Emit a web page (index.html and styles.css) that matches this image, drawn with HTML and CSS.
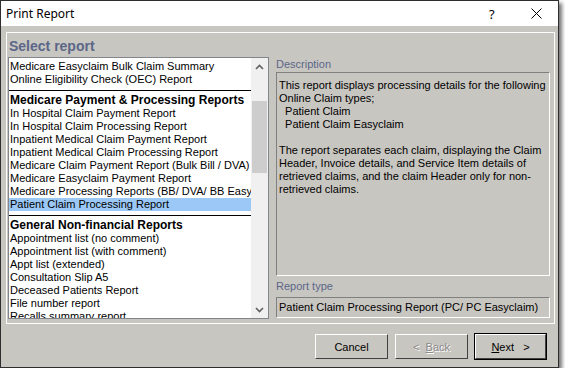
FILE: index.html
```html
<!DOCTYPE html>
<html lang="en">
 <head>
  <meta charset="UTF-8">
  <title>Print Report</title>
  <link rel="stylesheet" href="styles.css">
 </head>
 <body>
  <div class="window">
   <div class="titlebar">
    <span class="title">Print Report</span>
    <span class="help">?</span>
    <span class="close">
     <svg width="11" height="11" viewBox="0 0 11 11"><path d="M0.5 0.5 L10.5 10.5 M10.5 0.5 L0.5 10.5" stroke="#000" stroke-width="1" fill="none"/></svg>
    </span>
   </div>
   <div class="client">
    <div class="panel">
     <div class="heading">Select report</div>
     <div class="cols">
      <div class="listbox">
       <div class="items">
        <div class="item">Medicare Easyclaim Bulk Claim Summary</div>
        <div class="item">Online Eligibility Check (OEC) Report</div>
        <div class="sep"></div>
        <div class="item group">Medicare Payment &amp; Processing Reports</div>
        <div class="item">In Hospital Claim Payment Report</div>
        <div class="item">In Hospital Claim Processing Report</div>
        <div class="item">Inpatient Medical Claim Payment Report</div>
        <div class="item">Inpatient Medical Claim Processing Report</div>
        <div class="item">Medicare Claim Payment Report (Bulk Bill / DVA)</div>
        <div class="item">Medicare Easyclaim Payment Report</div>
        <div class="item">Medicare Processing Reports (BB/ DVA/ BB Easyclaim)</div>
        <div class="item selected">Patient Claim Processing Report</div>
        <div class="sep"></div>
        <div class="item group">General Non-financial Reports</div>
        <div class="item">Appointment list (no comment)</div>
        <div class="item">Appointment list (with comment)</div>
        <div class="item">Appt list (extended)</div>
        <div class="item">Consultation Slip A5</div>
        <div class="item">Deceased Patients Report</div>
        <div class="item">File number report</div>
        <div class="item">Recalls summary report</div>
       </div>
       <div class="scrollbar">
        <div class="arrow">
         <svg width="9" height="6" viewBox="0 0 9 6"><path d="M1 5 L4.5 1.5 L8 5" stroke="#606060" stroke-width="1.6" fill="none"/></svg>
        </div>
        <div class="track"><div class="thumb"></div></div>
        <div class="arrow">
         <svg width="9" height="6" viewBox="0 0 9 6"><path d="M1 1 L4.5 4.5 L8 1" stroke="#606060" stroke-width="1.6" fill="none"/></svg>
        </div>
       </div>
      </div>
      <div class="details">
       <div class="label">Description</div>
       <div class="field desc">
        <p>This report displays processing details for the following Online Claim types;<br>&nbsp; Patient Claim<br>&nbsp; Patient Claim Easyclaim</p>
        <p>The report separates each claim, displaying the Claim Header, Invoice details, and Service Item details of retrieved claims, and the claim Header only for non-retrieved claims.</p>
       </div>
       <div class="label type-label">Report type</div>
       <div class="field type">Patient Claim Processing Report (PC/ PC Easyclaim)</div>
      </div>
     </div>
    </div>
    <div class="buttons">
     <button class="btn">Cancel</button>
     <button class="btn" disabled>&lt;&nbsp; <u>B</u>ack</button>
     <button class="btn default"><u>N</u>ext&nbsp;&nbsp; &gt;</button>
    </div>
   </div>
  </div>
 </body>
</html>
```

FILE: styles.css
```css
body {
  margin: 0;
  background: #ffffff;
  font-family: "Liberation Sans", Arial, sans-serif;
  font-size: 11px;
  color: #000;
}
.window {
  width: 557px;
  height: 366px;
  border: 1px solid #2e2e2e;
  background: #c8c6c1;
  box-shadow: 3px 3px 4px rgba(0,0,0,0.55);
  display: flex;
  flex-direction: column;
}
.titlebar {
  height: 25px;
  background: #fff;
  display: flex;
  align-items: center;
  font-family: "Noto Sans", sans-serif;
  font-size: 12px;
}
.title {
  margin-left: 5px;
  flex: 1;
}
.help {
  width: 12px;
  margin-right: 30px;
  font-size: 13px;
}
.close {
  width: 11px;
  height: 11px;
  margin-right: 16px;
  display: flex;
}
.client {
  flex: 1;
  padding: 6px 3px 0 5px;
  display: flex;
  flex-direction: column;
}
.panel {
  height: 290px;
  border: 1px solid #fff;
  padding: 0 4px 0 1px;
  display: flex;
  flex-direction: column;
}
.heading {
  height: 20px;
  padding: 4px 0 0 1px;
  font-size: 14px;
  font-weight: bold;
  color: #5b6788;
  line-height: 19px;
}
.cols {
  display: flex;
  gap: 7px;
}
.listbox {
  width: 259px;
  height: 260px;
  border: 1px solid #82868c;
  background: #fff;
  display: flex;
  overflow: hidden;
}
.items {
  flex: 1;
  padding-top: 2px;
  overflow: hidden;
}
.item {
  height: 13px;
  line-height: 13px;
  padding-left: 1px;
  white-space: nowrap;
  overflow: hidden;
}
.item.group {
  font-weight: bold;
  font-size: 12px;
}
.item.selected {
  background: #9bc8f6;
}
.sep {
  height: 1px;
  background: #000;
  margin: 4px 0 3px;
}
.scrollbar {
  width: 17px;
  background: #f0f0f0;
  display: flex;
  flex-direction: column;
}
.arrow {
  height: 17px;
  display: flex;
  align-items: center;
  justify-content: center;
}
.track {
  flex: 1;
  padding: 26px 1px 0;
}
.thumb {
  height: 72px;
  background: #cdcdcd;
}
.details {
  flex: 1;
  display: flex;
  flex-direction: column;
}
.label {
  height: 15px;
  line-height: 14px;
  color: #5b6788;
}
.type-label {
  height: 21px;
  line-height: 20px;
}
.field {
  border: 1px solid;
  border-color: #808080 #fff #fff #808080;
  padding: 0 2px;
}
.desc {
  height: 196px;
  padding-top: 6px;
  line-height: 13px;
}
.desc p {
  margin: 0 0 13px;
}
.type {
  height: 19px;
  line-height: 19px;
}
.buttons {
  display: flex;
  justify-content: flex-end;
  gap: 7px;
  padding: 10px 9px 0 0;
}
.btn {
  width: 73px;
  height: 25px;
  background: #c8c6c1;
  border: 1px solid;
  border-color: #fff #404040 #404040 #fff;
  font-family: "Liberation Sans", Arial, sans-serif;
  font-size: 11px;
  color: #000;
  padding: 0;
}
.btn:disabled {
  color: #8a8a8a;
  text-shadow: 1px 1px 0 #fff;
}
.btn.default {
  box-shadow: 0 0 0 1px #000;
  width: 71px;
}
```
